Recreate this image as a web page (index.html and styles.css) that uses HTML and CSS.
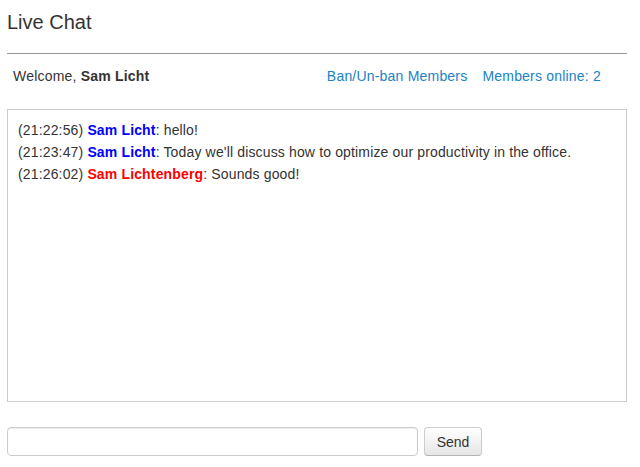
FILE: index.html
```html
<!DOCTYPE html>
<html>
<head>
<meta charset="utf-8">
<title>Live Chat</title>
<link rel="stylesheet" href="styles.css">
</head>
<body>
<div class="page">
  <h1 class="title">Live Chat</h1>
  <hr class="rule">
  <div class="topbar">
    <div class="welcome">Welcome, <strong>Sam Licht</strong></div>
    <div class="links">
      <a href="#" class="link">Ban/Un-ban Members</a>
      <a href="#" class="link">Members online: 2</a>
    </div>
  </div>
  <div class="chatbox">
    <div class="msg">(21:22:56) <span class="name blue">Sam Licht</span>: hello!</div>
    <div class="msg">(21:23:47) <span class="name blue">Sam Licht</span>: Today we'll discuss how to optimize our productivity in the office.</div>
    <div class="msg">(21:26:02) <span class="name red">Sam Lichtenberg</span>: Sounds good!</div>
  </div>
  <form class="sendrow" onsubmit="return false">
    <input type="text" class="msginput">
    <button type="button" class="sendbtn">Send</button>
  </form>
</div>
</body>
</html>
```
FILE: styles.css
```css
html, body {
  margin: 0;
  padding: 0;
  background: #fff;
}
body {
  font-family: "Liberation Sans", Arial, Helvetica, sans-serif;
  font-size: 14px;
  color: #333;
}
.page {
  width: 620px;
  padding-left: 7px;
}
.title {
  margin: 0;
  padding-top: 10px;
  font-size: 20px;
  line-height: 24px;
  font-weight: normal;
  color: #333;
}
.rule {
  margin: 19px 0 0 0;
  border: 0;
  border-top: 1px solid #999;
  height: 0;
}
.topbar {
  display: flex;
  justify-content: space-between;
  align-items: center;
  height: 44px;
  padding: 0 26px 0 6px;
  letter-spacing: 0.2px;
}
.welcome strong {
  font-weight: bold;
}
.links {
  display: flex;
  gap: 15px;
}
.link {
  color: #1a82c8;
  text-decoration: none;
}
.chatbox {
  margin-top: 11px;
  height: 282px;
  border: 1px solid #ccc;
  padding: 9px 10px 0 10px;
  box-sizing: content-box;
  width: 598px;
  letter-spacing: 0.15px;
}
.msg {
  line-height: 22px;
  white-space: nowrap;
}
.name {
  font-weight: bold;
}
.blue { color: #0000ff; }
.red { color: #ff0000; }
.sendrow {
  display: flex;
  gap: 6px;
  margin: 25px 0 0 0;
}
.msginput {
  width: 411px;
  height: 29px;
  box-sizing: border-box;
  border: 1px solid #ccc;
  border-radius: 4px;
  box-shadow: inset 0 1px 1px rgba(0,0,0,0.08);
  margin: 0;
  padding: 4px 6px;
  font-family: inherit;
  font-size: 14px;
}
.sendbtn {
  width: 58px;
  height: 29px;
  box-sizing: border-box;
  border: 1px solid #ccc;
  border-bottom-color: #b3b3b3;
  border-radius: 4px;
  background: linear-gradient(#ffffff, #e6e6e6);
  box-shadow: inset 0 1px 0 rgba(255,255,255,0.2), 0 1px 2px rgba(0,0,0,0.05);
  color: #333;
  font-family: inherit;
  font-size: 14px;
  margin: 0;
  padding: 0;
}
```
